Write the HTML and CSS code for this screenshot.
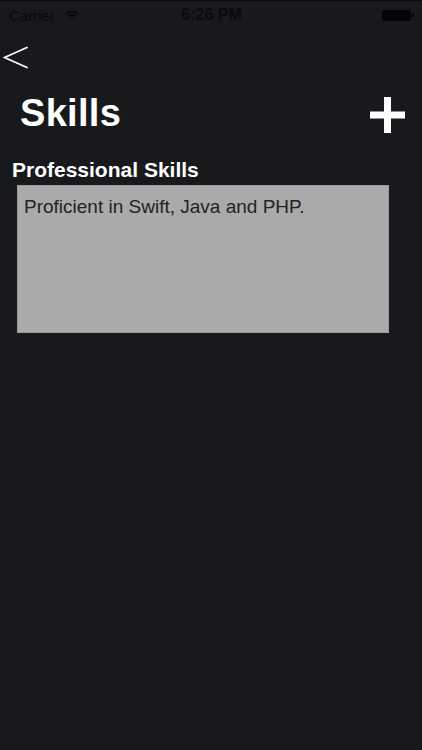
FILE: index.html
```html
<!DOCTYPE html>
<html>
<head>
<meta charset="utf-8">
<link rel="stylesheet" href="styles.css">
</head>
<body>
<div class="screen">
  <div class="statusbar">
    <div class="sb-left">
      <span class="carrier">Carrier</span>
      <svg class="wifi" width="16" height="12" viewBox="0 0 16 12">
        <path d="M1 4.2 A10 10 0 0 1 15 4.2 L13.4 5.8 A7.8 7.8 0 0 0 2.6 5.8 Z" fill="#0b0b0d"/>
        <path d="M3.6 6.8 A6.3 6.3 0 0 1 12.4 6.8 L10.8 8.4 A4 4 0 0 0 5.2 8.4 Z" fill="#0b0b0d"/>
        <path d="M6.2 9.4 A2.6 2.6 0 0 1 9.8 9.4 L8 11.4 Z" fill="#0b0b0d"/>
      </svg>
    </div>
    <span class="time">6:26 PM</span>
    <div class="sb-right">
      <span class="battery"></span><span class="nub"></span>
    </div>
  </div>

  <div class="back">
    <svg width="25" height="23" viewBox="0 0 25 23">
      <polyline points="24,1.5 1.5,11.5 24,21.5" fill="none" stroke="#ffffff" stroke-width="1.8" stroke-linecap="round" stroke-linejoin="miter"/>
    </svg>
  </div>

  <div class="title-row">
    <h1 class="title">Skills</h1>
    <svg class="plus" width="35" height="36" viewBox="0 0 35 36">
      <rect x="14" y="0" width="7" height="36" fill="#ffffff"/>
      <rect x="0" y="14.5" width="35" height="7" fill="#ffffff"/>
    </svg>
  </div>

  <h2 class="section">Professional Skills</h2>
  <div class="box">Proficient in Swift, Java and PHP.</div>
</div>
</body>
</html>
```

FILE: styles.css
```css
html, body {
  margin: 0;
  padding: 0;
  background: #18191d;
}
.screen {
  width: 422px;
  height: 750px;
  background: #18191d;
  font-family: "Liberation Sans", Arial, sans-serif;
  border-top: 1px solid #0c0c0e;
  box-sizing: border-box;
}
.statusbar {
  height: 28px;
  display: flex;
  align-items: center;
  justify-content: space-between;
  padding: 0 8px 0 9px;
  color: #0b0b0d;
  font-size: 15px;
}
.sb-left {
  display: flex;
  align-items: center;
  gap: 9px;
  width: 120px;
}
.carrier {
  line-height: 15px;
}
.time {
  font-weight: bold;
  font-size: 16px;
  line-height: 16px;
}
.sb-right {
  width: 120px;
  display: flex;
  justify-content: flex-end;
  align-items: center;
}
.battery {
  width: 29px;
  height: 11px;
  background: #050506;
  border-radius: 2px;
}
.nub {
  width: 2px;
  height: 4px;
  background: #050506;
  margin-left: 1px;
}
.back {
  padding: 17px 0 0 3px;
  height: 23px;
}
.back svg {
  display: block;
}
.title-row {
  display: flex;
  justify-content: space-between;
  align-items: flex-start;
  padding: 0 17px 0 20px;
  margin-top: 25px;
}
.title {
  margin: 0;
  font-size: 38px;
  line-height: 38px;
  font-weight: bold;
  color: #ffffff;
  letter-spacing: 0.3px;
}
.plus {
  display: block;
  margin-top: 3px;
}
.section {
  margin: 26px 0 0 12px;
  font-size: 21px;
  line-height: 21px;
  font-weight: bold;
  color: #ffffff;
}
.box {
  margin: 5px 0 0 17px;
  width: 372px;
  height: 148px;
  box-sizing: border-box;
  background: #aaaaaa;
  border: 1px solid #9c9c9c;
  padding: 11px 6px;
  font-size: 19px;
  line-height: 19px;
  color: #222226;
}
```
